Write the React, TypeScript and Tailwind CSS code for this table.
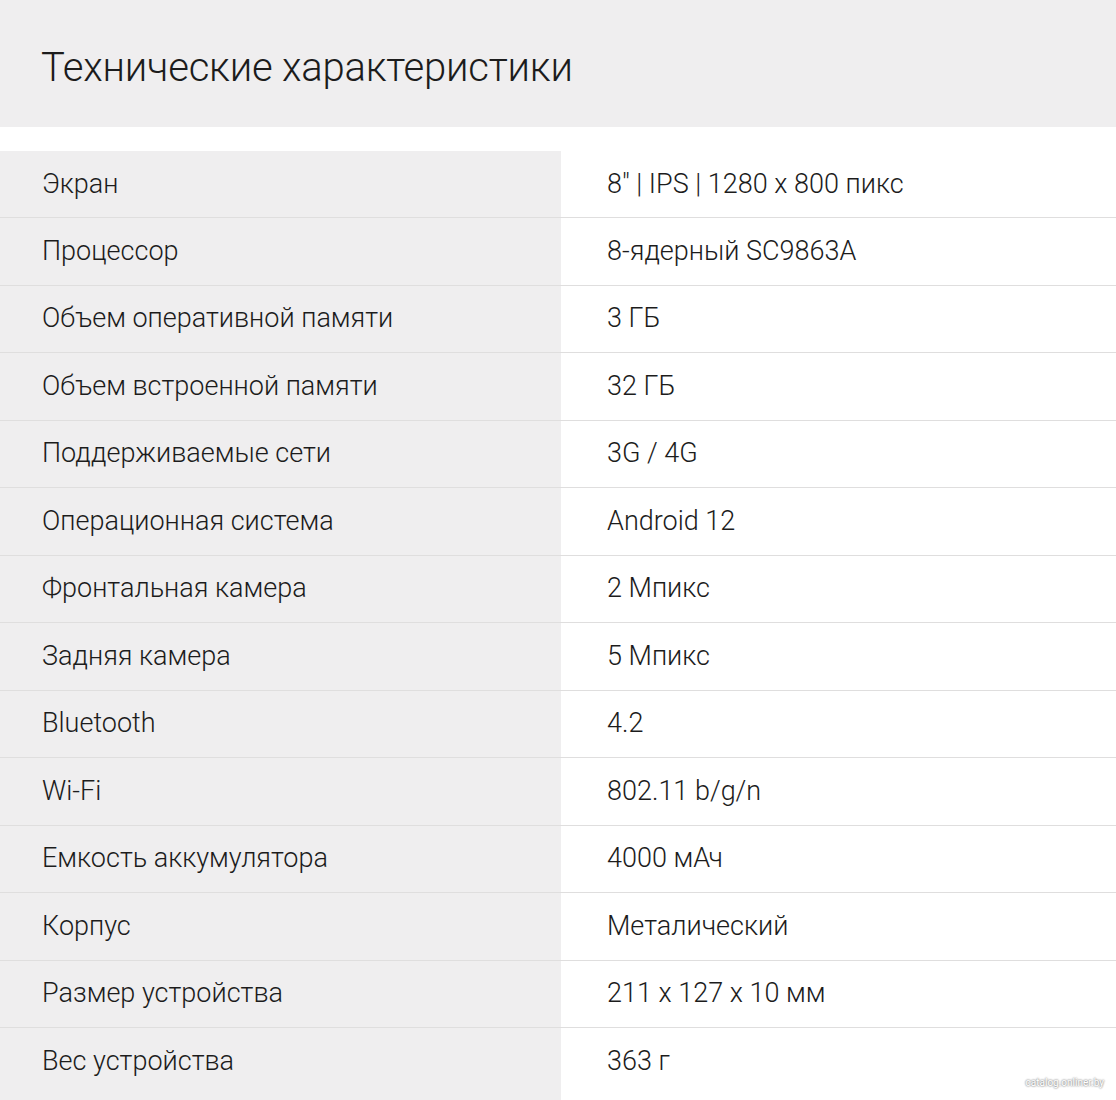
import React from 'react';

const specs = [
  { label: 'Экран', value: '8" | IPS | 1280 x 800 пикс' },
  { label: 'Процессор', value: '8-ядерный SC9863A' },
  { label: 'Объем оперативной памяти', value: '3 ГБ' },
  { label: 'Объем встроенной памяти', value: '32 ГБ' },
  { label: 'Поддерживаемые сети', value: '3G / 4G' },
  { label: 'Операционная система', value: 'Android 12' },
  { label: 'Фронтальная камера', value: '2 Мпикс' },
  { label: 'Задняя камера', value: '5 Мпикс' },
  { label: 'Bluetooth', value: '4.2' },
  { label: 'Wi-Fi', value: '802.11 b/g/n' },
  { label: 'Емкость аккумулятора', value: '4000 мАч' },
  { label: 'Корпус', value: 'Металический' },
  { label: 'Размер устройства', value: '211 x 127 x 10 мм' },
  { label: 'Вес устройства', value: '363 г' },
];

const App: React.FC = () => {
  return (
    <div className="relative w-[1116px] h-[1100px] overflow-hidden bg-white text-[#1c1c1c] font-light [font-family:Roboto,'Liberation_Sans',sans-serif]">
      {/* Header */}
      <div className="h-[127px] bg-[#efeeef] flex items-center pl-[41px] pt-[9px]">
        <h1 className="text-[40px] leading-none tracking-[-0.2px]">Технические характеристики</h1>
      </div>

      {/* Specs table */}
      <div className="mt-[21px]">
        {specs.map((s, i) => (
          <div
            key={s.label}
            className={`flex ${i === 0 ? 'h-[70px] pt-[3px]' : 'h-[67.5px]'} ${i < specs.length - 1 ? 'border-b border-[#dfdede]' : ''}`}
          >
            <div className="w-[561px] bg-[#efeeef] flex items-center pl-[42px] text-[27px] leading-none">
              {s.label}
            </div>
            <div className="flex-1 flex items-center pl-[46px] text-[27px] leading-none">
              {s.value}
            </div>
          </div>
        ))}
        <div className="flex h-[10px]">
          <div className="w-[561px] bg-[#efeeef]" />
        </div>
      </div>

      {/* Watermark */}
      <div className="absolute right-[12px] bottom-[12px] text-[10px] leading-none text-white font-normal [text-shadow:0_0_2px_#888,0_0_2px_#888]">
        catalog.onliner.by
      </div>
    </div>
  );
};

export default App;
